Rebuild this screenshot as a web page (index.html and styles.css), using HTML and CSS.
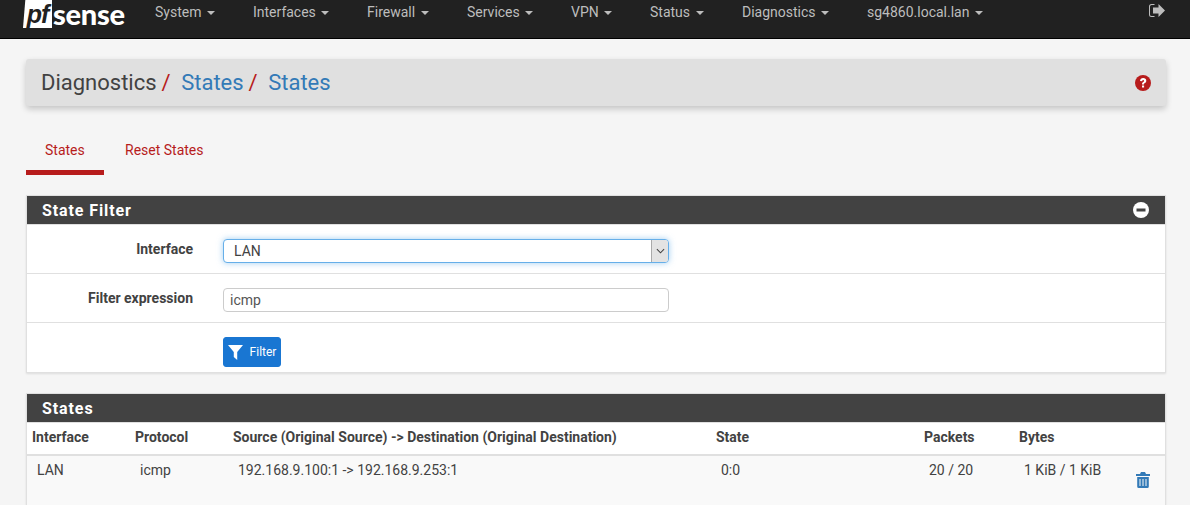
FILE: index.html
```html
<!DOCTYPE html>
<html lang="en">
<head>
<meta charset="utf-8">
<title>Diagnostics: States: States</title>
<link rel="stylesheet" href="styles.css">
</head>
<body>
<nav class="navbar">
  <a class="logo"><span class="logo-pf">pf</span><span class="logo-sense">sense</span></a>
  <ul class="menu">
    <li class="m-system">System <i class="caret"></i></li>
    <li class="m-interfaces">Interfaces <i class="caret"></i></li>
    <li class="m-firewall">Firewall <i class="caret"></i></li>
    <li class="m-services">Services <i class="caret"></i></li>
    <li class="m-vpn">VPN <i class="caret"></i></li>
    <li class="m-status">Status <i class="caret"></i></li>
    <li class="m-diag">Diagnostics <i class="caret"></i></li>
    <li class="m-host">sg4860.local.lan <i class="caret"></i></li>
  </ul>
  <svg class="logout" viewBox="0 0 16 13" aria-hidden="true"><path d="M5.500 0H2.500A2.500 2.500 0 0 0 0 2.500v8A2.500 2.500 0 0 0 2.500 13h3v-1H2.500A1.500 1.500 0 0 1 1 10.500v-8A1.500 1.500 0 0 1 2.500 1h3z"/><path d="M9.500 0 16 6.500 9.500 13V9.500H4v-6h5.500z"/></svg>
</nav>
<main class="page">
  <header class="crumbs">
    <h1 class="crumb-title">Diagnostics<span class="sep">/</span><a class="crumb-link">States</a><span class="sep">/</span><a class="crumb-link">States</a></h1>
    <svg class="help" viewBox="0 0 16 16" aria-hidden="true"><circle cx="8" cy="8" r="8"/><path class="help-q" d="M5 6.100C5.100 4.200 6.400 3 8.200 3c1.800 0 3.100 1.100 3.100 2.700 0 1.200-.6 1.800-1.500 2.400-.6.400-.8.700-.8 1.300H7c0-1.200.3-1.800 1.200-2.400.6-.4.900-.6.900-1.100 0-.5-.4-.8-.9-.8-.6 0-1 .4-1.100 1.100zM7 10.400h2.100v2.200H7z"/></svg>
  </header>
  <ul class="tabs">
    <li class="tab tab-active">States</li>
    <li class="tab">Reset States</li>
  </ul>
  <section class="panel panel-filter">
    <div class="panel-heading"><h2>State Filter</h2>
      <svg class="minus" viewBox="0 0 16 16" aria-hidden="true"><circle cx="8" cy="8" r="8"/><rect class="minus-bar" x="3.500" y="6.500" width="9" height="3"/></svg>
    </div>
    <div class="form-row">
      <label class="form-label">Interface</label>
      <div class="fake-select"><span>LAN</span><span class="select-arrow"><svg viewBox="0 0 10 6" aria-hidden="true"><path d="M1 1l4 4 4-4"/></svg></span></div>
    </div>
    <div class="form-row">
      <label class="form-label">Filter expression</label>
      <div class="fake-input">icmp</div>
    </div>
    <div class="form-row form-row-last">
      <span class="form-label"></span>
      <button class="btn"><svg viewBox="0 0 14 14" aria-hidden="true"><path d="M0 0h14L8.600 6.500V14L5.400 11.300V6.500z"/></svg>Filter</button>
    </div>
  </section>
  <section class="panel panel-states">
    <div class="panel-heading"><h2>States</h2></div>
    <table class="states">
      <thead>
        <tr><th class="c-if">Interface</th><th class="c-proto">Protocol</th><th class="c-src">Source (Original Source) -&gt; Destination (Original Destination)</th><th class="c-state">State</th><th class="c-pkt">Packets</th><th class="c-bytes">Bytes</th><th class="c-act"></th></tr>
      </thead>
      <tbody>
        <tr><td>LAN</td><td>icmp</td><td>192.168.9.100:1 -&gt; 192.168.9.253:1</td><td>0:0</td><td>20 / 20</td><td>1 KiB / 1 KiB</td><td class="act"><svg class="trash" viewBox="0 0 14 16" aria-hidden="true"><path d="M5 0h4l1 2h4v2H0V2h4z"/><path fill-rule="evenodd" d="M1.200 5h11.600v9.500a1.500 1.500 0 0 1-1.500 1.500H2.700a1.500 1.500 0 0 1-1.500-1.500zM3.500 7v7h1V7zm3 0v7h1V7zm3 0v7h1V7z"/></svg></td></tr>
      </tbody>
    </table>
  </section>
</main>
</body>
</html>
```
FILE: styles.css
```css
* { box-sizing: border-box; }
html, body { margin: 0; height: 505px; overflow: hidden; }
body { background: #f5f5f5; font-family: Roboto, "Liberation Sans", sans-serif; font-size: 14px; color: #424242; }

.navbar { height: 39px; background: #212121; border-bottom: 1px solid #000; display: flex; align-items: flex-start; padding-left: 23px; position: relative; }
.logo { display: flex; align-items: flex-start; color: #fff; width: 132px; height: 38px; }
.logo-pf { background: #fff; color: #212121; font: italic 700 25px/28px "Liberation Sans", sans-serif; width: 29px; height: 28px; text-align: center; letter-spacing: -1px; clip-path: polygon(8% 0, 100% 0, 100% 100%, 0 100%); }
.logo-sense { font: 900 29px/28px "Lato", sans-serif; margin-left: 1px; letter-spacing: -.3px; }
.menu { list-style: none; margin: 0; padding: 0; display: flex; color: #bdbdbd; line-height: 25px; font-size: 14px; }
.menu li { white-space: nowrap; }
.m-system { width: 98px; }
.m-interfaces { width: 114px; }
.m-firewall { width: 100px; }
.m-services { width: 104px; }
.m-vpn { width: 79px; }
.m-status { width: 92px; }
.m-diag { width: 125px; }
.caret { display: inline-block; width: 0; height: 0; margin-left: 2px; vertical-align: middle; border-top: 4px solid #bdbdbd; border-left: 4px solid transparent; border-right: 4px solid transparent; }
.logout { position: absolute; left: 1149px; top: 4px; width: 16px; height: 13px; fill: #bdbdbd; }

.page { padding: 20px 24px 0 26px; }
.crumbs { height: 47px; background: #e0e0e0; border-radius: 3px; box-shadow: 0 3px 6px rgba(0,0,0,.2); display: flex; align-items: center; justify-content: space-between; padding: 0 15px; }
.crumb-title { margin: 0; font-size: 22px; font-weight: 400; color: #424242; line-height: 47px; }
.sep { color: #b71c1c; margin: 0 10.500px 0 5px; }
.crumb-link { color: #337ab7; }
.help { width: 16px; height: 16px; fill: #b71c1c; }
.help-q { fill: #fff; }

.tabs { list-style: none; margin: 0; padding: 0; display: flex; margin-top: 26px; height: 43px; color: #b71c1c; font-size: 14px; }
.tab { padding: 9px 20px 0 21px; line-height: 18px; }
.tab-active { width: 78px; border-bottom: 5px solid #b71c1c; padding-left: 19px; }

.panel { background: #fff; border: 1px solid #e0e0e0; box-shadow: 0 1px 2px rgba(0,0,0,.1); }
.panel-filter { margin-top: 20px; height: 178px; }
.panel-states { margin-top: 20px; background: #f9f9f9; height: 112px; border-bottom: 0; }
.panel-heading { height: 29px; background: #424242; border-bottom: 1px solid #e0e0e0; display: flex; align-items: center; justify-content: space-between; padding: 0 16px 0 15px; }
.panel-heading h2 { margin: 0; color: #fff; font-size: 16px; font-weight: 700; letter-spacing: .9px; }
.minus { width: 16px; height: 16px; fill: #fff; }
.minus-bar { fill: #424242; }

.form-row { display: flex; align-items: flex-start; height: 49px; border-bottom: 1px solid #e0e0e0; padding-top: 14px; }
.form-row-last { border-bottom: 0; }
.form-label { width: 166px; text-align: right; font-weight: 700; font-size: 14px; line-height: 20px; margin-right: 30px; flex: none; }
.fake-select, .fake-input { width: 446px; height: 24px; border-radius: 4px; font-size: 14px; display: flex; align-items: center; background: #fff; }
.fake-select { border: 1px solid #66afe9; box-shadow: 0 0 6px rgba(102,175,233,.6); padding-left: 10px; justify-content: space-between; overflow: hidden; }
.select-arrow { width: 17px; height: 22px; background: #e3e3e3; border-left: 1px solid #aaa; display: flex; align-items: center; justify-content: center; }
.select-arrow svg { width: 9px; height: 6px; fill: none; stroke: #424242; stroke-width: 1.2; }
.fake-input { border: 1px solid #ccc; padding-left: 6px; color: #555; }
.btn { width: 58px; height: 30px; padding: 0; border: 1px solid #1976d2; border-radius: 3px; background: #1976d2; color: #fff; font: 400 12px Roboto, sans-serif; display: flex; align-items: center; justify-content: center; gap: 7px; }
.btn svg { width: 15px; height: 15px; fill: #fff; }

.states { width: 100%; border-collapse: collapse; table-layout: fixed; font-size: 14px; }
.states thead tr { background: #fff; height: 32px; }
.states th { text-align: left; font-weight: 700; font-size: 14px; padding: 0 0 3px 5px; border-bottom: 2px solid #e0e0e0; }
.states td { padding: 5px 0 0 10px; vertical-align: top; font-size: 14px; line-height: 18px; }
.c-if { width: 103px; }
.c-proto { width: 98px; }
.c-src { width: 483px; }
.c-state { width: 208px; }
.c-pkt { width: 95px; }
.c-bytes { width: 122px; }
.states td.act { padding: 16px 0 0 0; text-align: left; }
.trash { width: 14px; height: 16px; fill: #337ab7; display: block; }
```
